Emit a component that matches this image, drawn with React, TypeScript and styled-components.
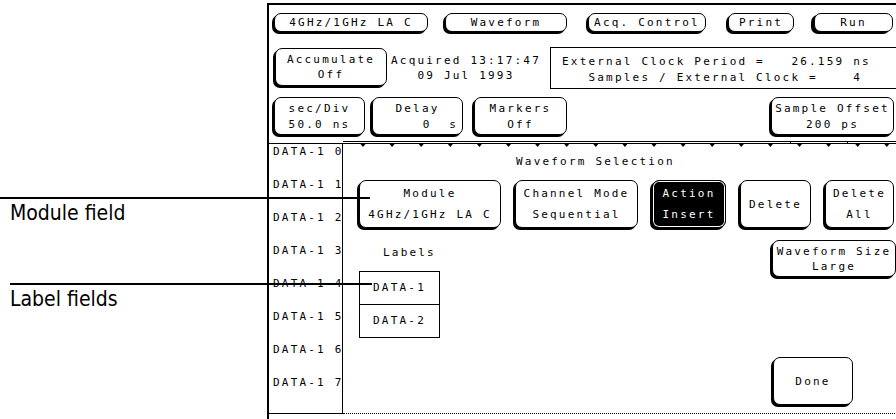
import React from "react";
import styled, { createGlobalStyle } from "styled-components";

const Global = createGlobalStyle`
  html, body { margin: 0; padding: 0; background: #fff; overflow: hidden; }
  body { width: 896px; height: 419px; }
`;

const Page = styled.div`
  position: relative;
  width: 896px;
  height: 419px;
  overflow: hidden;
  display: flex;
  font-family: "DejaVu Sans Mono", "Liberation Mono", monospace;
  font-size: 11px;
  letter-spacing: 2.2px;
  color: #000;
`;

const Gutter = styled.div`
  flex: none;
  width: 267px;
`;

const Screen = styled.div`
  flex: none;
  width: 660px;
  height: 460px;
  margin-top: 3px;
  border-top: 2px solid #000;
  border-left: 2px solid #000;
  display: flex;
  flex-direction: column;
`;

const Row = styled.div<{ $mt: number; $h: number }>`
  display: flex;
  align-items: flex-start;
  margin-top: ${(p) => p.$mt}px;
  height: ${(p) => p.$h}px;
  flex: none;
`;

const Key = styled.div<{
  $w: number;
  $h: number;
  $ml?: number;
  $mt?: number;
  $lh?: number;
  $pt?: number;
  $inv?: boolean;
  $heavy?: boolean;
}>`
  box-sizing: border-box;
  flex: none;
  width: ${(p) => p.$w}px;
  height: ${(p) => p.$h}px;
  margin-left: ${(p) => p.$ml ?? 0}px;
  margin-top: ${(p) => p.$mt ?? 0}px;
  padding-top: ${(p) => p.$pt ?? 0}px;
  border: 1px solid #000;
  border-radius: 7px;
  box-shadow: ${(p) => (p.$heavy ? "-3px 2px 0 #000" : "-2px 2px 0 #000")}
    ${(p) => (p.$inv ? ", inset 0 0 0 1px #fff" : "")};
  background: ${(p) => (p.$inv ? "#000" : "#fff")};
  color: ${(p) => (p.$inv ? "#fff" : "#000")};
  display: flex;
  flex-direction: column;
  align-items: center;
  justify-content: center;
  line-height: ${(p) => p.$lh ?? 15}px;
  white-space: pre;
`;

const KeyLine = styled.span<{ $align?: "left" | "right" | "center"; $pr?: number }>`
  align-self: stretch;
  text-align: ${(p) => p.$align ?? "center"};
  padding-right: ${(p) => p.$pr ?? 0}px;
`;

const Acquired = styled.div`
  flex: none;
  width: 158px;
  margin-left: 0;
  padding-top: 6px;
  text-align: center;
  line-height: 15px;
  white-space: nowrap;
`;

const ClockBox = styled.div`
  flex: 1;
  box-sizing: border-box;
  height: 42px;
  margin-left: 5px;
  border: 1px solid #000;
  border-right: none;
  padding: 6px 0 0 11px;
  line-height: 16px;
  white-space: pre;
`;

const Body = styled.div`
  flex: none;
  margin-top: 6px;
  height: 273px;
  display: grid;
  grid-template-columns: 74px 1fr;
`;

const DataCol = styled.div`
  box-sizing: border-box;
  margin-top: 2px;
  height: 271px;
  border-top: 1px solid #000;
  border-bottom: 1px solid #000;
  border-right: 1px solid #000;
  display: flex;
  flex-direction: column;
`;

const DataRow = styled.div`
  height: 33px;
  padding-left: 4px;
  line-height: 16px;
  white-space: pre;
`;

const Panel = styled.div`
  box-sizing: border-box;
  height: 273px;
  border-bottom: 1px dotted #000;
  display: flex;
  flex-direction: column;
`;

const Ticks = styled.svg`
  display: block;
  flex: none;
`;

const Title = styled.div`
  margin-top: 7px;
  padding-left: 173px;
  line-height: 16px;
`;

const PanelKeys = styled.div`
  display: flex;
  gap: 14px;
  margin-top: 10px;
  padding-left: 16px;
`;

const Lower = styled.div`
  display: grid;
  grid-template-columns: 413px 1fr;
  padding-left: 16px;
`;

const LeftCol = styled.div`
  display: flex;
  flex-direction: column;
`;

const RightCol = styled.div`
  display: flex;
  flex-direction: column;
  align-items: flex-start;
`;

const LabelsTitle = styled.div`
  margin-top: 17px;
  padding-left: 24px;
  line-height: 16px;
`;

const LabelBox = styled.div`
  margin-top: 10px;
  width: 81px;
  box-sizing: border-box;
  border: 1px solid #000;
`;

const LabelCell = styled.div<{ $first?: boolean }>`
  height: 32px;
  line-height: 32px;
  text-align: center;
  border-top: ${(p) => (p.$first ? "none" : "1px solid #000")};
`;

const Callout = styled.div<{ $top: number; $left: number; $w: number }>`
  position: absolute;
  top: ${(p) => p.$top}px;
  left: ${(p) => p.$left}px;
  width: ${(p) => p.$w}px;
  display: flex;
  flex-direction: column;
`;

const CalloutLine = styled.div`
  height: 2px;
  background: #000;
`;

const CalloutText = styled.div<{ $pl: number }>`
  padding-left: ${(p) => p.$pl}px;
  margin-top: 3px;
  font-family: "DejaVu Sans Condensed", "Liberation Sans", sans-serif;
  font-size: 21px;
  line-height: 22px;
  letter-spacing: 0;
`;

const tickXs = Array.from({ length: 19 }, (_, k) => 20 + k * 29.1);

export default function App() {
  return (
    <>
      <Global />
      <Page>
        <Gutter />
        <Screen>
          <Row $mt={8} $h={19}>
            <Key $w={154} $h={19} $ml={5}>4GHz/1GHz LA C</Key>
            <Key $w={122} $h={19} $ml={17}>Waveform</Key>
            <Key $w={118} $h={19} $ml={21}>Acq. Control</Key>
            <Key $w={66} $h={19} $ml={22}>Print</Key>
            <Key $w={79} $h={19} $ml={20} $heavy>Run</Key>
          </Row>
          <Row $mt={15} $h={42}>
            <Key $w={112} $h={38} $ml={6} $mt={1}>
              <KeyLine>Accumulate</KeyLine>
              <KeyLine>Off</KeyLine>
            </Key>
            <Acquired>
              Acquired 13:17:47
              <br />
              09 Jul 1993
            </Acquired>
            <ClockBox>
              {"External Clock Period =   26.159 ns\n   Samples / External Clock =    4"}
            </ClockBox>
          </Row>
          <Row $mt={8} $h={38}>
            <Key $w={91} $h={38} $ml={5} $lh={16} $pt={2}>
              <KeyLine>sec/Div</KeyLine>
              <KeyLine>50.0 ns</KeyLine>
            </Key>
            <Key $w={91} $h={38} $ml={7} $lh={16} $pt={2}>
              <KeyLine>Delay</KeyLine>
              <KeyLine $align="right" $pr={4}>{"0  s"}</KeyLine>
            </Key>
            <Key $w={93} $h={38} $ml={11} $lh={16} $pt={2}>
              <KeyLine>Markers</KeyLine>
              <KeyLine>Off</KeyLine>
            </Key>
            <Key $w={123} $h={38} $ml={204} $lh={16} $pt={2}>
              <KeyLine>Sample Offset</KeyLine>
              <KeyLine>200 ps</KeyLine>
            </Key>
          </Row>
          <Body>
            <DataCol>
              {[0, 1, 2, 3, 4, 5, 6, 7].map((n) => (
                <DataRow key={n}>{`DATA-1 ${n}`}</DataRow>
              ))}
            </DataCol>
            <Panel>
              <Ticks width="600" height="6" viewBox="0 0 600 6">
                <line x1="0" y1="0.5" x2="600" y2="0.5" stroke="#000" strokeWidth="1" />
                <line x1="0" y1="2.5" x2="600" y2="2.5" stroke="#000" strokeWidth="1" />
                {tickXs.map((x) => (
                  <polygon key={x} points={`${x - 2.5},3 ${x + 2.5},3 ${x},6`} fill="#000" />
                ))}
                <rect x="447" y="0" width="1" height="3" fill="#000" />
                <rect x="504" y="0" width="1" height="3" fill="#000" />
              </Ticks>
              <Title>Waveform Selection</Title>
              <PanelKeys>
                <Key $w={142} $h={48} $lh={21}>
                  <KeyLine>Module</KeyLine>
                  <KeyLine>4GHz/1GHz LA C</KeyLine>
                </Key>
                <Key $w={123} $h={48} $lh={21}>
                  <KeyLine>Channel Mode</KeyLine>
                  <KeyLine>Sequential</KeyLine>
                </Key>
                <Key $w={74} $h={48} $lh={21} $inv>
                  <KeyLine>Action</KeyLine>
                  <KeyLine>Insert</KeyLine>
                </Key>
                <Key $w={71} $h={48} $lh={21}>
                  <KeyLine>Delete</KeyLine>
                </Key>
                <Key $w={69} $h={48} $lh={21}>
                  <KeyLine>Delete</KeyLine>
                  <KeyLine>All</KeyLine>
                </Key>
              </PanelKeys>
              <Lower>
                <LeftCol>
                  <LabelsTitle>Labels</LabelsTitle>
                  <LabelBox>
                    <LabelCell $first>DATA-1</LabelCell>
                    <LabelCell>DATA-2</LabelCell>
                  </LabelBox>
                </LeftCol>
                <RightCol>
                  <Key $w={124} $h={37} $mt={12}>
                    <KeyLine>Waveform Size</KeyLine>
                    <KeyLine>Large</KeyLine>
                  </Key>
                  <Key $w={80} $h={48} $mt={80} $ml={1}>
                    <KeyLine>Done</KeyLine>
                  </Key>
                </RightCol>
              </Lower>
            </Panel>
          </Body>
        </Screen>
        <Callout $top={197} $left={0} $w={370}>
          <CalloutLine />
          <CalloutText $pl={10}>Module field</CalloutText>
        </Callout>
        <Callout $top={283} $left={10} $w={362}>
          <CalloutLine />
          <CalloutText $pl={0}>Label fields</CalloutText>
        </Callout>
      </Page>
    </>
  );
}
